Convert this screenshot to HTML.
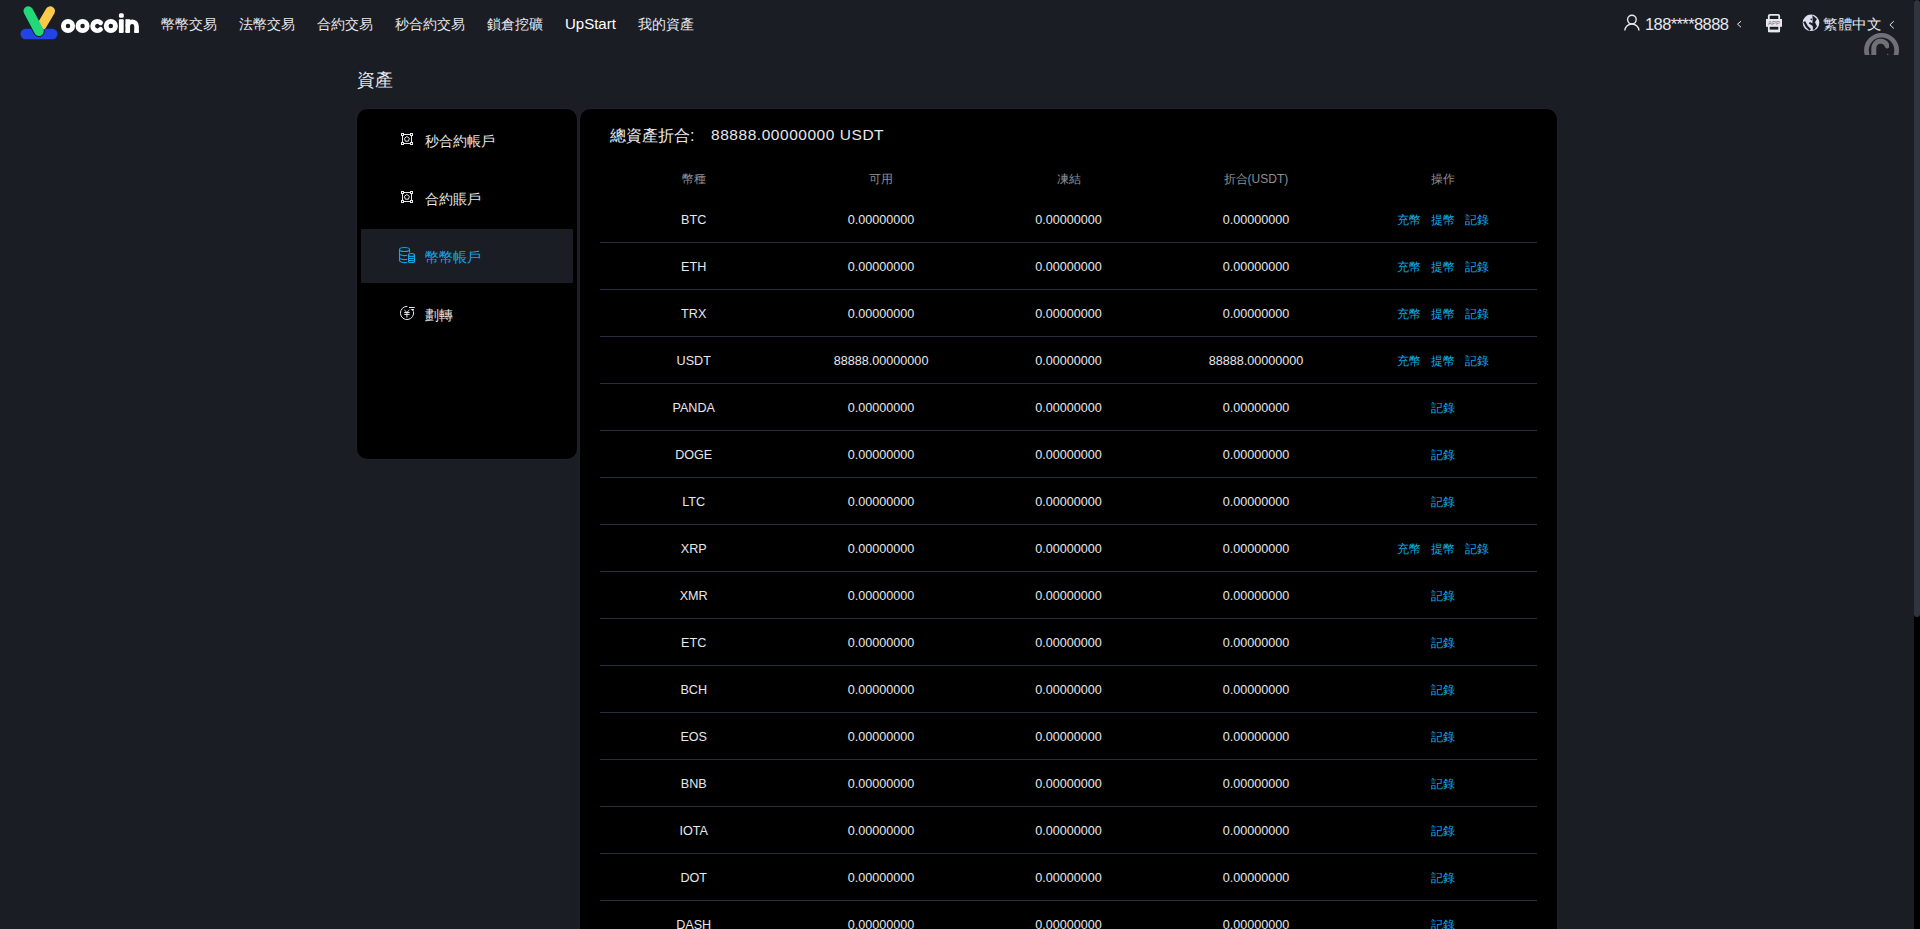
<!DOCTYPE html>
<html lang="zh-Hant"><head><meta charset="utf-8"><title>資產</title>
<style>
*{margin:0;padding:0;box-sizing:border-box}
html,body{width:1920px;height:929px;overflow:hidden;background:#1a1d24;font-family:"Liberation Sans",sans-serif;color:#fff}
.abs{position:absolute}
svg{position:absolute;overflow:visible}
.nav{position:absolute;top:16px;left:161px;font-size:14px;color:#e6e8ee;white-space:nowrap}
.nav span{position:absolute;top:0}
.right{position:absolute;font-size:14px;color:#e6e8ee;white-space:nowrap}
.title{position:absolute;left:357px;top:68px;font-size:18px;color:#e6e8ee}
.side{position:absolute;left:357px;top:109px;width:220px;height:350px;background:#000;border-radius:10px;padding:4px;box-shadow:0 0 0 1px #1e2129}
.item{position:relative;height:54px;margin-bottom:4px;font-size:14px;color:#e6e8ee}
.item.act{background:#1a1d24;color:#11a8e8}
.item .tx{position:absolute;left:64px;top:20px}
.main{position:absolute;left:580px;top:109px;width:977px;height:900px;background:#000;border-radius:10px;box-shadow:0 0 0 1px #1e2129}
.total{position:absolute;left:30px;top:17px;font-size:16px;color:#e6e8ee;white-space:nowrap}
.tnum{position:absolute;left:131px;top:17px;font-size:15.5px;letter-spacing:0.54px;color:#e6e8ee;white-space:nowrap}
.table{position:absolute;left:20px;top:52px;width:937px}
.th{display:flex;height:35px;padding-top:1px;align-items:center;font-size:12px;color:#8c909a}
.tr{display:flex;height:47px;align-items:center;font-size:12.6px;color:#e6e8ee;border-bottom:1px solid #27303f;padding-top:2px}
.th div,.td{flex:1;text-align:center}
.ops{font-size:12px}
.ops a{color:#11a8e8;margin:0 5px;font-weight:500}
.sb{position:absolute;left:1914px;top:0;width:6px;height:929px;background:#000}
.sbt{position:absolute;left:0;top:0;width:6px;height:617px;background:#30343c;border-radius:3px}

</style></head><body>
<!-- logo -->
<svg width="140" height="45" style="left:0;top:0" viewBox="0 0 140 45">
  <rect x="20.5" y="28.8" width="37" height="10.4" rx="5.2" fill="#2344e4"/>
  <path d="M28.3 11 L39 31.2" stroke="#1a1d24" stroke-width="11.5" stroke-linecap="round" fill="none"/>
  <path d="M50.3 11 L42 25" stroke="#fbca4b" stroke-width="9.4" stroke-linecap="round" fill="none"/>
  <path d="M28.3 11 L39 31.2" stroke="#22d878" stroke-width="9.6" stroke-linecap="round" fill="none"/>
  <g fill="none" stroke="#fff" stroke-width="4.8">
    <circle cx="68" cy="26.05" r="4.65"/>
    <circle cx="82.55" cy="26.05" r="4.65"/>
    <path d="M100.59 22.76 A4.65 4.65 0 1 0 100.59 29.34" stroke-linecap="round"/>
    <circle cx="110.8" cy="26.05" r="4.65"/>
    <path d="M127.75 32.6 V26.1 A4.4 4.4 0 0 1 136.55 26.1 V32.6" stroke-width="4.6"/>
  </g>
  <rect x="125.45" y="19.2" width="4.5" height="7" fill="#fff"/>
  <rect x="125.45" y="30" width="4.5" height="3.1" rx="1" fill="#fff"/>
  <rect x="134.25" y="30" width="4.6" height="3.1" rx="1" fill="#fff"/>
  <rect x="118.9" y="19.3" width="4.8" height="13.8" rx="1" fill="#fff"/>
  <rect x="118.9" y="13.2" width="4.9" height="4.6" rx="1.6" fill="#fff"/>
</svg>
<div class="nav">
  <span style="left:0">幣幣交易</span>
  <span style="left:78px">法幣交易</span>
  <span style="left:156px">合約交易</span>
  <span style="left:234px">秒合約交易</span>
  <span style="left:326px">鎖倉挖礦</span>
  <span style="left:404px;top:-1px;font-size:15px;color:#fff">UpStart</span>
  <span style="left:477px">我的資產</span>
</div>
<!-- user -->
<svg width="20" height="20" style="left:1622px;top:13px" viewBox="1622 13 20 20" fill="none" stroke="#e6e8ee" stroke-width="1.4">
  <circle cx="1631.9" cy="19.6" r="4.3"/>
  <path d="M1624.8 30.6 A7.1 6.6 0 0 1 1639 30.6"/>
</svg>
<div class="right" style="left:1645px;top:14.5px;font-size:16.5px;letter-spacing:-0.6px">188****8888</div>
<svg width="8" height="10" style="left:1736px;top:20px" viewBox="1736 20 8 10" fill="none" stroke="#e6e8ee" stroke-width="1">
  <path d="M1741 21.2 L1737.5 24.2 L1741 27.2"/>
</svg>
<!-- app -->
<svg width="18" height="20" style="left:1765px;top:13px" viewBox="1765 13 18 20">
  <rect x="1768.8" y="14.9" width="10.4" height="16.4" rx="1.2" fill="none" stroke="#e6e8ee" stroke-width="1.8"/>
  <rect x="1766" y="19" width="16" height="7.8" fill="#e6e8ee"/>
  <text x="1774" y="25.1" font-size="6" font-family="Liberation Sans" text-anchor="middle" fill="#6a6f88">APP</text>
  <rect x="1768" y="29.6" width="12" height="2.6" fill="#e6e8ee"/>
</svg>
<!-- globe -->
<svg width="20" height="20" style="left:1801px;top:13px" viewBox="1801 13 20 20">
  <circle cx="1811" cy="22.8" r="8.3" fill="#dcdff0"/>
  <path d="M1812.4 15.2 L1816.9 18.9 L1815 22.2 L1817 26.3 L1814.3 29.8 L1812.9 29.8 L1812.8 26.2 L1810.9 24.8 L1808.8 23.6 L1809.8 22 L1812.4 23.2 L1812.6 19.2 Z" fill="#1a1d24"/>
  <path d="M1804.2 21.6 Q1806 26.6 1810.3 29.9" stroke="#1a1d24" stroke-width="2.3" fill="none"/>
  <circle cx="1811.3" cy="19.4" r="0.8" fill="#1a1d24"/>
</svg>
<div class="right" style="left:1822.8px;top:15.8px;font-size:14px;transform:scaleX(1.04);transform-origin:0 0">繁體中文</div>
<svg width="8" height="10" style="left:1888px;top:20px" viewBox="1888 20 8 10" fill="none" stroke="#e6e8ee" stroke-width="1">
  <path d="M1893.8 21.2 L1889.9 24.8 L1893.8 28.4"/>
</svg>
<!-- spinner -->
<svg width="40" height="24" style="left:1861px;top:31px" viewBox="1861 31 40 24">
  <defs><clipPath id="cp"><rect x="1861" y="31" width="40" height="23.9"/></clipPath><clipPath id="cp2"><rect x="1861" y="31" width="28" height="23.9"/></clipPath></defs>
  <g clip-path="url(#cp)" fill="none" stroke="#6f7176">
    <circle cx="1881.55" cy="50.34" r="15.1" stroke-width="4.7"/>
  </g>
  <g clip-path="url(#cp2)" fill="none" stroke="#6f7176">
    <path d="M1873.8 56 V48.2 A6.9 6.9 0 0 1 1887.2 45.8" stroke-width="5" stroke-linecap="round"/>
  </g>
  <circle cx="1887.7" cy="54.4" r="0.7" fill="#6f7176"/>
</svg>
<div class="title">資產</div>
<div class="side">
  <div class="item">
    <svg width="60" height="54" style="left:0;top:0" viewBox="0 0 60 54" fill="none" stroke="#e6e8ee" stroke-width="1">
      <rect x="40.5" y="20.5" width="2" height="2"/><rect x="49.5" y="20.5" width="2" height="2"/>
      <rect x="40.5" y="29.5" width="2" height="2"/><rect x="49.5" y="29.5" width="2" height="2"/>
      <path d="M43 21.5 H49 M43 30.5 H49 M41.5 23 V29 M50.5 23 V29"/>
      <path d="M45.9 23.5 L48.4 25.3 L47.45 28.2 L44.35 28.2 L43.4 25.3 Z"/>
    </svg>
    <div class="tx">秒合約帳戶</div>
  </div>
  <div class="item">
    <svg width="60" height="54" style="left:0;top:0" viewBox="0 0 60 54" fill="none" stroke="#e6e8ee" stroke-width="1">
      <rect x="40.5" y="20.5" width="2" height="2"/><rect x="49.5" y="20.5" width="2" height="2"/>
      <rect x="40.5" y="29.5" width="2" height="2"/><rect x="49.5" y="29.5" width="2" height="2"/>
      <path d="M43 21.5 H49 M43 30.5 H49 M41.5 23 V29 M50.5 23 V29"/>
      <path d="M45.9 23.5 L48.4 25.3 L47.45 28.2 L44.35 28.2 L43.4 25.3 Z"/>
    </svg>
    <div class="tx">合約賬戶</div>
  </div>
  <div class="item act">
    <svg width="60" height="54" style="left:0;top:0" viewBox="0 0 60 54" fill="none" stroke="#11a8e8" stroke-width="1.1">
      <ellipse cx="43.5" cy="20.5" rx="5" ry="2"/>
      <path d="M38.5 20.5 V31.5 A5 2 0 0 0 46 33.3"/>
      <path d="M48.5 20.5 V24"/>
      <path d="M38.5 24.5 A5 2 0 0 0 46 26.3"/>
      <path d="M38.5 28.5 A5 2 0 0 0 46 30.3"/>
      <path d="M47.5 34 V26 A3 1.6 0 0 1 53.5 26 V34 Z" fill="#1a1d24" stroke="#1a1d24" stroke-width="2.2"/>
      <path d="M47.5 26 A3 1.5 0 0 1 53.5 26 A3 1.5 0 0 1 47.5 26 Z M47.5 26 V32.5 A3 1 0 0 0 53.5 32.5 V26 M47.5 29.5 H53.5 M47.5 31.5 H53.5"/>
    </svg>
    <div class="tx">幣幣帳戶</div>
  </div>
  <div class="item">
    <svg width="60" height="54" style="left:0;top:0" viewBox="0 0 60 54" fill="none" stroke="#e6e8ee" stroke-width="1">
      <path d="M46.4 19.4 A6.6 6.6 0 1 0 52.4 24.3"/>
      <path d="M48 20.5 H53.7"/>
      <path d="M49.4 22 H53.2 L52.2 24.3 Z" fill="#e6e8ee" stroke="none"/>
      <path d="M43.4 23 L45.9 25.4 L48.4 23 M43.2 25.5 H48.6 M43.2 27.4 H48.6 M45.9 25.4 V30.6"/>
    </svg>
    <div class="tx">劃轉</div>
  </div>
</div>
<div class="main">
  <div class="total">總資產折合:</div>
  <div class="tnum">88888.00000000 USDT</div>
  <div class="table">
    <div class="th"><div>幣種</div><div>可用</div><div>凍結</div><div>折合(USDT)</div><div>操作</div></div>
<div class="tr"><div class="td">BTC</div><div class="td">0.00000000</div><div class="td">0.00000000</div><div class="td">0.00000000</div><div class="td ops"><a>充幣</a><a>提幣</a><a>記錄</a></div></div>
<div class="tr"><div class="td">ETH</div><div class="td">0.00000000</div><div class="td">0.00000000</div><div class="td">0.00000000</div><div class="td ops"><a>充幣</a><a>提幣</a><a>記錄</a></div></div>
<div class="tr"><div class="td">TRX</div><div class="td">0.00000000</div><div class="td">0.00000000</div><div class="td">0.00000000</div><div class="td ops"><a>充幣</a><a>提幣</a><a>記錄</a></div></div>
<div class="tr"><div class="td">USDT</div><div class="td">88888.00000000</div><div class="td">0.00000000</div><div class="td">88888.00000000</div><div class="td ops"><a>充幣</a><a>提幣</a><a>記錄</a></div></div>
<div class="tr"><div class="td">PANDA</div><div class="td">0.00000000</div><div class="td">0.00000000</div><div class="td">0.00000000</div><div class="td ops"><a>記錄</a></div></div>
<div class="tr"><div class="td">DOGE</div><div class="td">0.00000000</div><div class="td">0.00000000</div><div class="td">0.00000000</div><div class="td ops"><a>記錄</a></div></div>
<div class="tr"><div class="td">LTC</div><div class="td">0.00000000</div><div class="td">0.00000000</div><div class="td">0.00000000</div><div class="td ops"><a>記錄</a></div></div>
<div class="tr"><div class="td">XRP</div><div class="td">0.00000000</div><div class="td">0.00000000</div><div class="td">0.00000000</div><div class="td ops"><a>充幣</a><a>提幣</a><a>記錄</a></div></div>
<div class="tr"><div class="td">XMR</div><div class="td">0.00000000</div><div class="td">0.00000000</div><div class="td">0.00000000</div><div class="td ops"><a>記錄</a></div></div>
<div class="tr"><div class="td">ETC</div><div class="td">0.00000000</div><div class="td">0.00000000</div><div class="td">0.00000000</div><div class="td ops"><a>記錄</a></div></div>
<div class="tr"><div class="td">BCH</div><div class="td">0.00000000</div><div class="td">0.00000000</div><div class="td">0.00000000</div><div class="td ops"><a>記錄</a></div></div>
<div class="tr"><div class="td">EOS</div><div class="td">0.00000000</div><div class="td">0.00000000</div><div class="td">0.00000000</div><div class="td ops"><a>記錄</a></div></div>
<div class="tr"><div class="td">BNB</div><div class="td">0.00000000</div><div class="td">0.00000000</div><div class="td">0.00000000</div><div class="td ops"><a>記錄</a></div></div>
<div class="tr"><div class="td">IOTA</div><div class="td">0.00000000</div><div class="td">0.00000000</div><div class="td">0.00000000</div><div class="td ops"><a>記錄</a></div></div>
<div class="tr"><div class="td">DOT</div><div class="td">0.00000000</div><div class="td">0.00000000</div><div class="td">0.00000000</div><div class="td ops"><a>記錄</a></div></div>
<div class="tr"><div class="td">DASH</div><div class="td">0.00000000</div><div class="td">0.00000000</div><div class="td">0.00000000</div><div class="td ops"><a>記錄</a></div></div>
  </div>
</div>
<div class="sb"><div class="sbt"></div></div>

</body></html>
